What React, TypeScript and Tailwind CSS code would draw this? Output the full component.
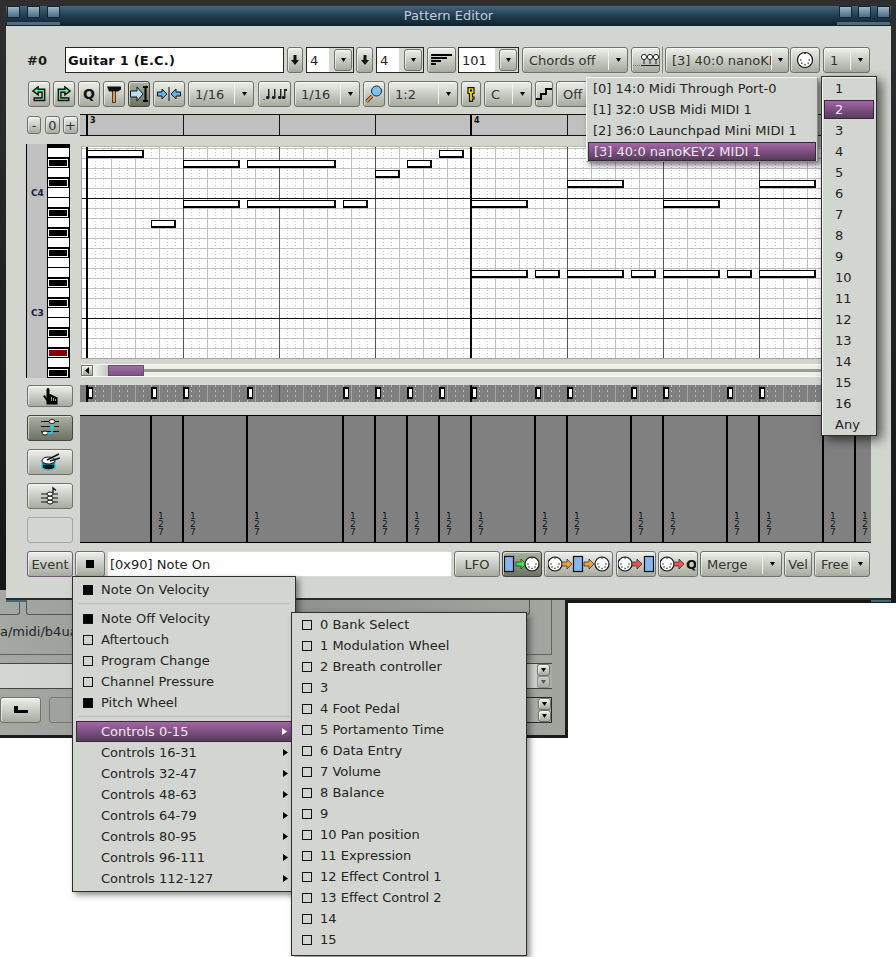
import type { ReactNode } from 'react'

const NOTES = [
    [87, 150, 57], [183, 160, 57], [247, 160, 89], [183, 200, 57], [247, 200, 89], [343, 200, 25],
    [151, 220, 25], [375, 170, 25], [407, 160, 25], [439, 150, 25], [471, 200, 57], [567, 180, 57],
    [663, 200, 57], [759, 180, 57], [471, 270, 57], [535, 270, 25], [567, 270, 57], [631, 270, 25],
    [663, 270, 57], [727, 270, 25], [759, 270, 57], [823, 270, 25], [855, 270, 16],
]
const STARTS = [87, 151, 183, 247, 343, 375, 407, 439, 471, 535, 567, 631, 663, 727, 759, 823, 855]
const SEGMENTS = [70, 32, 64, 96, 32, 32, 32, 32, 64, 32, 64, 32, 64, 32, 64, 32, 17]
const KEYS = 'WBWBWWBWBWBWWBWBWWBWRWB'.split('')
const PORTS = ['[0] 14:0 Midi Through Port-0', '[1] 32:0 USB Midi MIDI 1', '[2] 36:0 Launchpad Mini MIDI 1', '[3] 40:0 nanoKEY2 MIDI 1']
const CHANNELS = ['1', '2', '3', '4', '5', '6', '7', '8', '9', '10', '11', '12', '13', '14', '15', '16', 'Any']
const CONTROLS = ['0 Bank Select', '1 Modulation Wheel', '2 Breath controller', '3', '4 Foot Pedal', '5 Portamento Time', '6 Data Entry', '7 Volume', '8 Balance', '9', '10 Pan position', '11 Expression', '12 Effect Control 1', '13 Effect Control 2', '14', '15']
const RANGES = ['Controls 0-15', 'Controls 16-31', 'Controls 32-47', 'Controls 48-63', 'Controls 64-79', 'Controls 80-95', 'Controls 96-111', 'Controls 112-127']

const range = (from: number, to: number, step: number) => {
    const out: number[] = []
    for (let v = from; v <= to; v += step) out.push(v)
    return out
}

const btnBase = 'flex items-center justify-center shrink-0 rounded-[3px] border text-[13px] text-[#33352f] bg-linear-to-b shadow-[inset_1px_1px_0_rgba(255,255,255,0.55)]'
const btnUp = `${btnBase} border-[#70736a] from-[#eef0ea] to-[#a6aa9f]`
const btnDown = `${btnBase} border-[#45473f] from-[#adb3a4] to-[#6c7363]`
const selected = 'bg-linear-to-b from-[#a566a8] to-[#573c5b] border border-[#38283c] text-[#efe6f2]'

function Btn({ className = '', down = false, children }: { className?: string; down?: boolean; children?: ReactNode }) {
    return <div className={`${down ? btnDown : btnUp} ${className}`}>{children}</div>
}

function Tri({ color = '#000' }: { color?: string }) {
    return (
        <svg width="5" height="4" viewBox="0 0 5 4" className="shrink-0">
            <path d="M0 0H5L2.500 4Z" fill={color} />
        </svg>
    )
}

function Combo({ className = '', label, tail = 'w-[18px]' }: { className?: string; label: string; tail?: string }) {
    return (
        <Btn className={`justify-start! overflow-hidden ${className}`}>
            <span className="flex-1 min-w-0 pl-[6px] pt-px whitespace-nowrap overflow-hidden">{label}</span>
            <span className="w-px h-[20px] bg-[#f2f3ef] shrink-0" />
            <span className={`flex justify-center shrink-0 ${tail}`}><Tri /></span>
        </Btn>
    )
}

function Spin({ className = '', field, value }: { className?: string; field: string; value: string }) {
    return (
        <div className={`flex items-center shrink-0 h-[26px] border border-[#26261f] bg-[#d6d8d2] ${className}`}>
            <span className={`h-full bg-white pl-[3px] text-[13px] leading-[25px] text-[#222] ${field}`}>{value}</span>
            <Btn className="w-[18px] h-[22px] ml-auto mr-[1px]"><Tri /></Btn>
        </div>
    )
}

function DownArrow() {
    return (
        <svg width="8" height="10" viewBox="0 0 8 10">
            <path d="M2.500 0H5.500V5H8L4 10L0 5H2.500Z" fill="#111" />
        </svg>
    )
}

function Din({ x = 0, y = 0, r = 7 }: { x?: number; y?: number; r?: number }) {
    const k = r / 7
    return (
        <g transform={`translate(${x} ${y})`}>
            <circle r={r} fill="#fff" stroke="#111" strokeWidth="1.2" />
            {[[-4, 0], [4, 0], [-3, 3], [3, 3], [0, 4.5]].map(([dx, dy], i) => (
                <rect key={i} x={dx * k - 0.7} y={dy * k - 0.7} width="1.4" height="1.4" fill="#444" />
            ))}
            <rect x={-1} y={-r} width="2" height="1.500" fill="#444" />
        </g>
    )
}

function Arr({ x, y, fill }: { x: number; y: number; fill: string }) {
    return <path d={`M${x} ${y - 2}h5v-3l5 5l-5 5v-3h-5Z`} fill={fill} stroke="#333" strokeWidth=".8" />
}

function Blue({ x, y = 2 }: { x: number; y?: number }) {
    return <rect x={x + 0.5} y={y + 0.5} width="9" height="15" fill="#86b6f2" stroke="#111" strokeWidth="1.2" />
}

const Pill = ({ w, h = 20, children }: { w: number; h?: number; children: ReactNode }) => (
    <svg width={w} height={h} viewBox={`0 0 ${w} ${h}`}>{children}</svg>
)

function Undo({ flip = false }: { flip?: boolean }) {
    return (
        <svg width="14" height="16" viewBox="0 0 16 18">
            <g transform={flip ? 'translate(16 0) scale(-1 1)' : undefined}>
                <path d="M1 5.500L7 .8V3.500H14.500V16.500H2.500V13.500H11.500V7H7V10Z" fill="#66ee92" stroke="#111" strokeWidth="1.6" />
            </g>
        </svg>
    )
}

function Ticks() {
    return (
        <Pill w={24} h={14}>
            {[3, 9, 15].map(x => (
                <g key={x}>
                    <rect x={x + 2} y="2" width="1.4" height="9" fill="#222" />
                    <rect x={x} y="9" width="3.4" height="3" rx="1" fill="#222" />
                </g>
            ))}
            <rect x="21" y="2" width="1.4" height="9" fill="#222" />
            <rect x="19" y="9" width="3.4" height="3" rx="1" fill="#222" />
            <rect x="21" y="2" width="3" height="2" fill="#222" />
            <rect x="0" y="12" width="2" height="1" fill="#666" />
        </Pill>
    )
}

function PianoRoll() {
    return (
        <svg width="790" height="213" viewBox="81 146 790 213" shapeRendering="crispEdges" className="block">
            <rect x="81" y="146" width="790" height="213" fill="#fff" />
            {range(95, 871, 8).map(x => (
                <line key={x} x1={x + 0.5} x2={x + 0.5} y1="146" y2="358" stroke="#c9c9c9" strokeDasharray="1 2" />
            ))}
            {range(148, 358, 10).map(y => <rect key={y} x="81" y={y} width="790" height="1" fill="#c0c0c0" />)}
            {range(87, 871, 24).map(x => <rect key={x} x={x} y="146" width="1" height="212" fill="#c0c0c0" />)}
            {range(183, 871, 96).map(x => <rect key={x} x={x} y="146" width="1" height="212" fill="#555" />)}
            <rect x="81" y="198" width="790" height="1" fill="#111" />
            <rect x="81" y="318" width="790" height="1" fill="#111" />
            <rect x="86" y="146" width="2" height="212" fill="#000" />
            <rect x="470" y="146" width="2" height="212" fill="#000" />
            {NOTES.map(([x, y, w]) => (
                <g key={`${x}-${y}`}>
                    <rect x={x} y={y} width={w} height="8" fill="#000" />
                    <rect x={x + 1} y={y + 1} width={w - 3} height="5" fill="#fff" />
                </g>
            ))}
            <rect x="81" y="146" width="790" height="1" fill="#b8b8b8" />
            <rect x="81" y="146" width="1" height="213" fill="#a8a8a8" />
            <rect x="81" y="358" width="790" height="1" fill="#a0a0a0" />
        </svg>
    )
}

function EventStrip() {
    return (
        <svg width="791" height="17" viewBox="80 385 791 17" shapeRendering="crispEdges" className="block">
            <rect x="80" y="385" width="791" height="17" fill="#7f7f7f" />
            {range(95, 871, 8).map(x => (
                <line key={x} x1={x + 0.5} x2={x + 0.5} y1="385" y2="402" stroke="#bdbdbd" strokeDasharray="2 3" />
            ))}
            {range(111, 871, 24).map(x => <rect key={x} x={x} y="385" width="1" height="17" fill="#a6a6a6" />)}
            {range(183, 871, 96).map(x => <rect key={x} x={x} y="385" width="1" height="17" fill="#555" />)}
            <rect x="86" y="385" width="2" height="17" fill="#000" />
            <rect x="470" y="385" width="2" height="17" fill="#000" />
            {STARTS.map(x => (
                <g key={x}>
                    <rect x={x} y="387" width="6" height="12" fill="#000" />
                    <rect x={x + 2} y="389" width="3" height="8" fill="#fff" />
                </g>
            ))}
        </svg>
    )
}

function MenuItem({ label, mark, arrow, active }: { label: string; mark?: 'on' | 'off'; arrow?: boolean; active?: boolean }) {
    return (
        <div className={`relative flex items-center h-[21px] text-[13px] ${active ? `${selected} mx-[3px] rounded-none` : 'text-[#23241f]'}`}>
            {mark && (
                <span className={`absolute left-[10px] w-[10px] h-[10px] border border-[#111] ${mark === 'on' ? 'bg-[#050505]' : ''}`} />
            )}
            <span className={active ? 'pl-[24px]' : 'pl-[28px]'}>{label}</span>
            {arrow && (
                <svg width="5" height="7" viewBox="0 0 5 7" className={`absolute ${active ? 'right-[4px]' : 'right-[7px]'}`}>
                    <path d="M0 0L5 3.500L0 7Z" fill={active ? '#fff' : '#000'} />
                </svg>
            )}
        </div>
    )
}

function Tile() {
    return <span className="w-[13px] h-[12px] border border-[#16242e] bg-linear-to-b from-[#9fb5c4] to-[#4a6e85]" />
}

export default function App() {
    return (
        <div className="relative w-[896px] h-[957px] overflow-hidden bg-white font-['DejaVu_Sans','Liberation_Sans',sans-serif]">
            {/* desktop behind */}
            <div className="absolute left-0 top-0 w-full h-[603px] bg-linear-to-b from-[#2f2f2f] to-[#161616]" />

            {/* window behind */}
            <div className="absolute left-0 top-[590px] w-[568px] h-[148px] flex flex-col pr-[13px] border-r-[3px] border-b-[3px] border-[#1d1d1d] bg-linear-to-r from-[#a5a8a2] via-[#8f928c] to-[#a3a69f]">
                <div className="h-[65px] border-r border-b border-[#61645e] flex flex-col">
                    <div className="h-[25px] shrink-0 flex">
                        <div className="w-[20px] border-r border-b border-[#555] rounded-br-[3px]" />
                        <div className="flex-1 ml-[6px] border-l border-b border-r mr-[21px] border-[#555] rounded-b-[3px]" />
                    </div>
                    <div className="h-[34px] overflow-hidden whitespace-nowrap text-[13px] leading-[34px] text-[#20252a]">a/midi/b4ua</div>
                </div>
                <div className="mt-[8px] h-[26px] shrink-0 flex items-center justify-end border-y border-[#45473f] bg-linear-to-r from-[#d5d7d2] via-[#c4c6c1] to-[#d0d2cd]">
                    <div className="h-full w-[15px] flex flex-col bg-[#a9aba5]">
                        <Btn className="w-[13px] h-[12px]"><Tri /></Btn>
                        <Btn className="w-[13px] h-[12px] opacity-50"><Tri /></Btn>
                    </div>
                </div>
                <div className="mt-[8px] h-[26px] shrink-0 flex items-stretch">
                    <Btn className="w-[41px]">
                        <Pill w={14} h={8}><path d="M0 0H4V4H14V7H0Z" fill="#000" /></Pill>
                    </Btn>
                    <div className="ml-[8px] w-[60px] rounded-[3px] border border-[#777a74]" />
                    <div className="flex-1 flex justify-end">
                        <div className="h-full w-[30px] border border-[#2c2c28] bg-[#a9aba5] flex flex-col items-end">
                            <Btn className="w-[13px] h-[12px]"><Tri /></Btn>
                            <Btn className="w-[13px] h-[12px]"><Tri /></Btn>
                        </div>
                    </div>
                </div>
            </div>

            {/* Pattern Editor window */}
            <div className="absolute left-[6px] top-[6px] w-[885px] h-[596px] flex flex-col">
                <div className="h-[20px] shrink-0 flex justify-between px-px bg-linear-to-b from-[#44677f] via-[#213d50] to-[#0f222f]">
                    <div className="flex flex-col">
                        <div className="flex gap-[7px]"><Tile /><Tile /><Tile /></div>
                        <div className="mt-[4px] h-[3px] w-[53px] bg-[#6d8799] opacity-70" />
                    </div>
                    <span className="text-[13px] leading-[20px] text-[#c3ccd2]">Pattern Editor</span>
                    <div className="flex flex-col items-end">
                        <div className="flex gap-[6px]"><Tile /><Tile /><Tile /></div>
                        <div className="mt-[4px] h-[3px] w-[53px] bg-[#6d8799] opacity-70" />
                    </div>
                </div>

                <div className="flex-1 flex flex-col pl-[21px] pr-[20px] pt-[21px] bg-[#d3d6d0] border-b-2 border-[#2b2c28]">
                    {/* first toolbar */}
                    <div className="h-[26px] shrink-0 flex items-center">
                        <span className="w-[38px] shrink-0 pt-px text-[13px] font-bold text-[#1b1b1b]">#0</span>
                        <div className="w-[219px] h-[26px] shrink-0 border border-[#26261f] bg-white pl-[2px] text-[13px] leading-[25px] font-bold tracking-[0.2px] text-[#111]">Guitar 1 (E.C.)</div>
                        <Btn className="w-[16px] h-[26px] ml-[3px]"><DownArrow /></Btn>
                        <Spin className="w-[48px] ml-[3px]" field="w-[22px]" value="4" />
                        <Btn className="w-[17px] h-[26px] ml-[2px]"><DownArrow /></Btn>
                        <Spin className="w-[48px] ml-[3px]" field="w-[22px]" value="4" />
                        <Btn className="w-[29px] h-[26px] ml-[3px]">
                            <Pill w={21} h={13}>
                                <rect x="0" y="0" width="21" height="2" fill="#000" />
                                <rect x="0" y="3" width="16" height="2" fill="#000" />
                                <rect x="0" y="6" width="10" height="2" fill="#000" />
                                <rect x="0" y="9" width="5" height="2" fill="#000" />
                            </Pill>
                        </Btn>
                        <Spin className="w-[61px] ml-[2px]" field="w-[36px]" value="101" />
                        <Combo className="w-[106px] h-[26px] ml-[3px]" label="Chords off" />
                        <Btn className="w-[29px] h-[26px] ml-[3px]">
                            <Pill w={26} h={14}>
                                <path d="M0 12.500H8" stroke="#777" strokeDasharray="1 1" />
                                {[11, 17, 23].map(x => (
                                    <g key={x}>
                                        <circle cx={x} cy="4" r="2.600" fill="#fff" stroke="#222" />
                                        <path d={`M${x} 7V11`} stroke="#222" />
                                    </g>
                                ))}
                                <path d="M8 12.500H26" stroke="#222" />
                            </Pill>
                        </Btn>
                        <span className="w-px h-[26px] ml-[2px] bg-[#85887f] shrink-0" />
                        <Combo className="w-[124px] h-[26px] ml-[2px]" label="[3] 40:0 nanoKE" tail="w-[16px]" />
                        <Btn className="w-[30px] h-[26px] ml-px">
                            <Pill w={18} h={18}><Din x={9} y={9} r={7.5} /></Pill>
                        </Btn>
                        <Combo className="w-[47px] h-[26px] ml-[3px]" label="1" />
                    </div>

                    {/* second toolbar */}
                    <div className="h-[26px] mt-[8px] ml-px shrink-0 flex items-center gap-[3px]">
                        <Btn className="w-[22px] h-[26px]"><Undo /></Btn>
                        <Btn className="w-[22px] h-[26px]"><Undo flip /></Btn>
                        <Btn className="w-[22px] h-[26px] pt-px text-[14px]! font-bold text-[#111]!">Q</Btn>
                        <Btn className="w-[22px] h-[26px]">
                            <Pill w={16} h={18}>
                                <path d="M1 1.500H15V4.500L12 6.500H3Z" fill="#111" />
                                <rect x="6.500" y="6" width="3" height="11.500" fill="#e79a3f" stroke="#222" strokeWidth=".8" />
                            </Pill>
                        </Btn>
                        <Btn down className="w-[22px] h-[26px]">
                            <Pill w={18} h={18}>
                                <path d="M0.500 6H7V2L13 9L7 16V12H0.500Z" fill="#bcdcf8" stroke="#111" />
                                <path d="M13 1H18V3H16.500V15H18V17H13V15H14.500V3H13Z" fill="#000" />
                            </Pill>
                        </Btn>
                        <Btn className="w-[32px] h-[26px]">
                            <Pill w={24} h={14}>
                                <path d="M.5 5H5V2L10 7L5 12V9H.5Z" fill="#58b6f0" stroke="#111" />
                                <rect x="11.500" y="0" width="1" height="14" fill="#111" />
                                <path d="M23.500 5H19V2L14 7L19 12V9H23.500Z" fill="#58b6f0" stroke="#111" />
                            </Pill>
                        </Btn>
                        <Combo className="w-[66px] h-[26px]" label="1/16" />
                        <Btn className="w-[33px] h-[26px] ml-px"><Ticks /></Btn>
                        <Combo className="w-[66px] h-[26px]" label="1/16" />
                        <Btn className="w-[22px] h-[26px]">
                            <Pill w={18} h={18}>
                                <path d="M7 11L1.500 16.500" stroke="#222" strokeWidth="3.400" />
                                <path d="M7 11L1.500 16.500" stroke="#e79a3f" strokeWidth="1.800" />
                                <circle cx="11.500" cy="6" r="5" fill="#7cc4f4" stroke="#222" />
                            </Pill>
                        </Btn>
                        <Combo className="w-[70px] h-[26px]" label="1:2" />
                        <Btn className="w-[20px] h-[26px]">
                            <Pill w={8} h={15}>
                                <path d="M1 .7H7V6.500H5.500V10H7V12H5.500V14.300H2.500V6.500H1Z" fill="#f5d900" stroke="#111" strokeWidth="1.200" />
                                <rect x="3" y="2.500" width="2" height="2" fill="#111" />
                            </Pill>
                        </Btn>
                        <Combo className="w-[48px] h-[26px]" label="C" />
                        <Btn className="w-[18px] h-[26px]">
                            <Pill w={16} h={14}>
                                <path d="M0 12H5V7H10V2H16" fill="none" stroke="#000" strokeWidth="2" />
                            </Pill>
                        </Btn>
                        <Combo className="w-[60px] h-[26px]" label="Off" />
                    </div>

                    {/* zoom buttons and time ruler */}
                    <div className="h-[22px] mt-[7px] shrink-0 flex items-center">
                        <Btn className="w-[14px] h-[18px] pt-px">-</Btn>
                        <Btn className="w-[15px] h-[18px] ml-[4px] pt-px">0</Btn>
                        <Btn className="w-[15px] h-[18px] ml-[3px] pt-px">+</Btn>
                        <svg width="791" height="22" viewBox="80 114 791 22" shapeRendering="crispEdges" className="block ml-[2px]">
                            <rect x="80" y="114" width="791" height="22" fill="#c0c0c0" />
                            <rect x="80" y="114" width="791" height="1" fill="#111" />
                            <rect x="80" y="135" width="791" height="1" fill="#111" />
                            {range(183, 871, 96).map(x => <rect key={x} x={x} y="114" width="1" height="22" fill="#111" />)}
                            <rect x="86" y="114" width="2" height="22" fill="#000" />
                            <rect x="470" y="114" width="2" height="22" fill="#000" />
                            <text x="90" y="123" fontSize="8" fontWeight="700" fill="#111" shapeRendering="auto">3</text>
                            <text x="474" y="123" fontSize="8" fontWeight="700" fill="#111" shapeRendering="auto">4</text>
                        </svg>
                    </div>

                    {/* piano keys, roll and its scrollbar */}
                    <div className="h-[234px] mt-[8px] shrink-0 flex">
                        <div className="relative w-[44px] -ml-px flex border-l border-black bg-[#c0c0c0]">
                            <span className="absolute left-[4px] top-[43px] text-[9px] leading-[12px] font-bold text-[#102040]">C4</span>
                            <span className="absolute left-[4px] top-[163px] text-[9px] leading-[12px] font-bold text-[#102040]">C3</span>
                            <div className="ml-[20px] w-[23px] h-full bg-black pt-[3px] pl-px pr-px flex flex-col">
                                {KEYS.map((k, i) => (
                                    <div key={i} className="h-[10px] shrink-0 pt-px">
                                        {k === 'W' && <div className="h-[9px] bg-white" />}
                                        {k === 'B' && <div className="h-[8px] mt-px mr-px border border-white bg-black" />}
                                        {k === 'R' && <div className="h-[8px] mt-px mr-px border border-white bg-[#8b0000]" />}
                                    </div>
                                ))}
                            </div>
                        </div>
                        <div className="ml-[11px] w-[790px] pt-[2px] flex flex-col">
                            <PianoRoll />
                            <div className="mt-[5px] h-[13px] flex items-stretch border-y border-[#f7f7f4] bg-[#8d9086]">
                                <Btn className="w-[12px] rounded-none">
                                    <svg width="4" height="7" viewBox="0 0 4 7"><path d="M4 0V7L0 3.500Z" fill="#000" /></svg>
                                </Btn>
                                <div className="w-[15px] bg-linear-to-r from-[#f2f2ef] to-[#c5c7c0]" />
                                <div className="w-[36px] border border-[#6a4c70] bg-linear-to-b from-[#a06ea4] to-[#7d5583]" />
                                <div className="flex-1 flex flex-col justify-center bg-[#eef0ea]">
                                    <div className="h-[3px] bg-[#9a9d92]" />
                                </div>
                            </div>
                        </div>
                    </div>

                    {/* tools, event strip and automation */}
                    <div className="h-[158px] mt-[7px] shrink-0 flex">
                        <div className="w-[46px] shrink-0 flex flex-col">
                            <Btn className="w-full h-[22px]">
                                <Pill w={15} h={17}>
                                    <path d="M0 8L2 7L3.500 10V1.500Q3.500 0 5 0Q6.500 0 6.500 1.500V6H8.500V7H10.500V8H12.500V9H14.500V16.500H3.500V13Z" fill="#000" />
                                    <path d="M8.500 9V13M10.500 10V13M12.500 11V13" stroke="#fff" strokeWidth=".6" />
                                </Pill>
                            </Btn>
                            <Btn down className="w-full h-[26px] mt-[8px]">
                                <Pill w={20} h={20}>
                                    <path d="M1 3.500H19M1 8.500H19M1 13.500H19" stroke="#111" />
                                    <ellipse cx="12" cy="3.500" rx="3" ry="2" fill="#fff" stroke="#111" />
                                    <ellipse cx="5" cy="15" rx="3" ry="2" fill="#fff" stroke="#111" />
                                    <path d="M7 15H12V8M10 10L12 7L14 10" fill="none" stroke="#20d0e8" strokeWidth="1.600" />
                                </Pill>
                            </Btn>
                            <Btn className="w-full h-[26px] mt-[8px]">
                                <Pill w={20} h={20}>
                                    <path d="M2 9V16Q8.500 20 15 16V9Z" fill="#111" stroke="#20d0e8" strokeWidth="1.400" />
                                    <path d="M2 12H15" stroke="#20d0e8" />
                                    <ellipse cx="8.500" cy="8.500" rx="6.500" ry="3.500" fill="#fff" stroke="#111" />
                                    <path d="M7 8L19 2M10 9L20 6" stroke="#111" strokeWidth="1.600" />
                                </Pill>
                            </Btn>
                            <Btn className="w-full h-[26px] mt-[8px]">
                                <Pill w={18} h={20}>
                                    <path d="M0 8H17M0 12H17M0 16H17" stroke="#111" />
                                    <ellipse cx="9" cy="16" rx="3" ry="2" fill="#fff" stroke="#111" />
                                    <ellipse cx="9" cy="12" rx="3" ry="2" fill="#fff" stroke="#111" />
                                    <ellipse cx="9" cy="8" rx="3" ry="2" fill="#fff" stroke="#111" />
                                    <path d="M12 7V2L15 4.500" fill="none" stroke="#111" strokeWidth="1.300" />
                                </Pill>
                            </Btn>
                            <div className="w-full h-[26px] mt-[8px] rounded-[3px] border border-[#a5a8a0] bg-[#d3d6d0]" />
                        </div>
                        <div className="ml-[7px] w-[791px] flex flex-col">
                            <EventStrip />
                            <div className="mt-[13px] h-[128px] flex bg-[#808080] border-y border-black">
                                {SEGMENTS.map((w, i) => (
                                    <div
                                        key={i}
                                        className={`shrink-0 h-full flex flex-col justify-end items-start pb-[6px] pl-[6px] text-[9px] leading-[8px] text-[#161616] ${i > 0 ? 'border-l-2 border-black' : ''}`}
                                        style={{ width: w }}
                                    >
                                        {i > 0 && <><span>1</span><span>2</span><span>7</span></>}
                                    </div>
                                ))}
                            </div>
                        </div>
                    </div>

                    {/* event row */}
                    <div className="h-[26px] mt-[8px] shrink-0 flex items-center">
                        <Btn className="w-[46px] h-[26px] pt-px border-[#74597a]!">Event</Btn>
                        <Btn className="w-[30px] h-[26px] ml-[2px]"><span className="w-[8px] h-[8px] bg-black" /></Btn>
                        <div className="w-[345px] h-[26px] ml-[2px] shrink-0 border border-[#d8d8d4] bg-white pl-[2px] text-[13px] leading-[25px] text-[#222]">[0x90] Note On</div>
                        <Btn className="w-[46px] h-[26px] ml-[2px] pt-px">LFO</Btn>
                        <Btn down className="w-[40px] h-[26px] ml-[2px]">
                            <Pill w={36} h={20}>
                                <Blue x={0} />
                                <Arr x={12} y={10} fill="#3ce83c" />
                                <Din x={28} y={10} />
                            </Pill>
                        </Btn>
                        <Btn className="w-[69px] h-[26px] ml-[2px]">
                            <Pill w={62} h={20}>
                                <Din x={7} y={10} />
                                <Arr x={14} y={10} fill="#f0a040" />
                                <Blue x={25} />
                                <Arr x={36} y={10} fill="#f0a040" />
                                <Din x={54} y={10} />
                            </Pill>
                        </Btn>
                        <Btn className="w-[40px] h-[26px] ml-[3px]">
                            <Pill w={36} h={20}>
                                <Din x={7} y={10} />
                                <Arr x={14} y={10} fill="#f05050" />
                                <Blue x={26} />
                            </Pill>
                        </Btn>
                        <Btn className="w-[40px] h-[26px] ml-[2px]">
                            <Din2Q />
                        </Btn>
                        <Combo className="w-[82px] h-[26px] ml-[2px]" label="Merge" />
                        <Btn className="w-[28px] h-[26px] ml-[2px] pt-px">Vel</Btn>
                        <Combo className="w-[56px] h-[26px] ml-[2px]" label="Free" />
                    </div>
                </div>
                <div className="h-[2px] shrink-0 flex justify-between">
                    <span className="w-[20px] bg-[#3f6a85]" />
                    <span className="w-[20px] bg-[#3f6a85]" />
                </div>
            </div>

            {/* output port popup */}
            <div className="absolute left-[586px] top-[77px] w-[232px] h-[85px] bg-[#d3d6d0] border-t border-l border-[#f6f6f2] border-r border-b border-r-[#8a8c85] border-b-[#8a8c85] shadow-[3px_3px_6px_rgba(0,0,0,0.55)]">
                {PORTS.map((p, i) => (
                    i === 3
                        ? <div key={p} className={`flex items-center h-[19px] mx-px mt-px pl-[5px] text-[13px] ${selected}`}>{p}</div>
                        : <div key={p} className="flex items-center h-[21px] pl-[6px] text-[13px] text-[#23241f]">{p}</div>
                ))}
            </div>

            {/* channel popup */}
            <div className="absolute left-[821px] top-[76px] w-[56px] h-[360px] pt-px bg-[#d3d6d0] border border-[#2e2e2a] shadow-[inset_1px_1px_0_#f6f6f2,5px_4px_10px_rgba(0,0,0,0.6)]">
                {CHANNELS.map((c, i) => (
                    i === 1
                        ? <div key={c} className={`flex items-center h-[19px] mx-[2px] my-px pl-[10px] text-[13px] ${selected}`}>{c}</div>
                        : <div key={c} className="flex items-center h-[21px] pl-[13px] text-[13px] text-[#23241f]">{c}</div>
                ))}
            </div>

            {/* event menu */}
            <div className="absolute left-[72px] top-[576px] w-[224px] h-[316px] pt-[2px] bg-[#d3d6d0] border border-[#2e2e2a] shadow-[3px_3px_6px_rgba(0,0,0,0.45)]">
                <MenuItem label="Note On Velocity" mark="on" />
                <div className="h-px mx-[6px] my-[3px] mb-[4px] bg-[#b9bbb4]" />
                <MenuItem label="Note Off Velocity" mark="on" />
                <MenuItem label="Aftertouch" mark="off" />
                <MenuItem label="Program Change" mark="off" />
                <MenuItem label="Channel Pressure" mark="off" />
                <MenuItem label="Pitch Wheel" mark="on" />
                <div className="h-px mx-[6px] my-[3px] mb-[4px] bg-[#b9bbb4]" />
                {RANGES.map((r, i) => <MenuItem key={r} label={r} arrow active={i === 0} />)}
            </div>

            {/* controls submenu */}
            <div className="absolute left-[291px] top-[612px] w-[236px] h-[344px] pt-px bg-[#d3d6d0] border border-[#2e2e2a] shadow-[3px_3px_6px_rgba(0,0,0,0.45)]">
                {CONTROLS.map(c => <MenuItem key={c} label={c} mark="off" />)}
            </div>
        </div>
    )
}

function Din2Q() {
    return (
        <Pill w={36} h={20}>
            <Din x={7} y={10} />
            <Arr x={14} y={10} fill="#f05050" />
            <text x="26" y="15" fontSize="13" fontWeight="700" fill="#111">Q</text>
        </Pill>
    )
}
